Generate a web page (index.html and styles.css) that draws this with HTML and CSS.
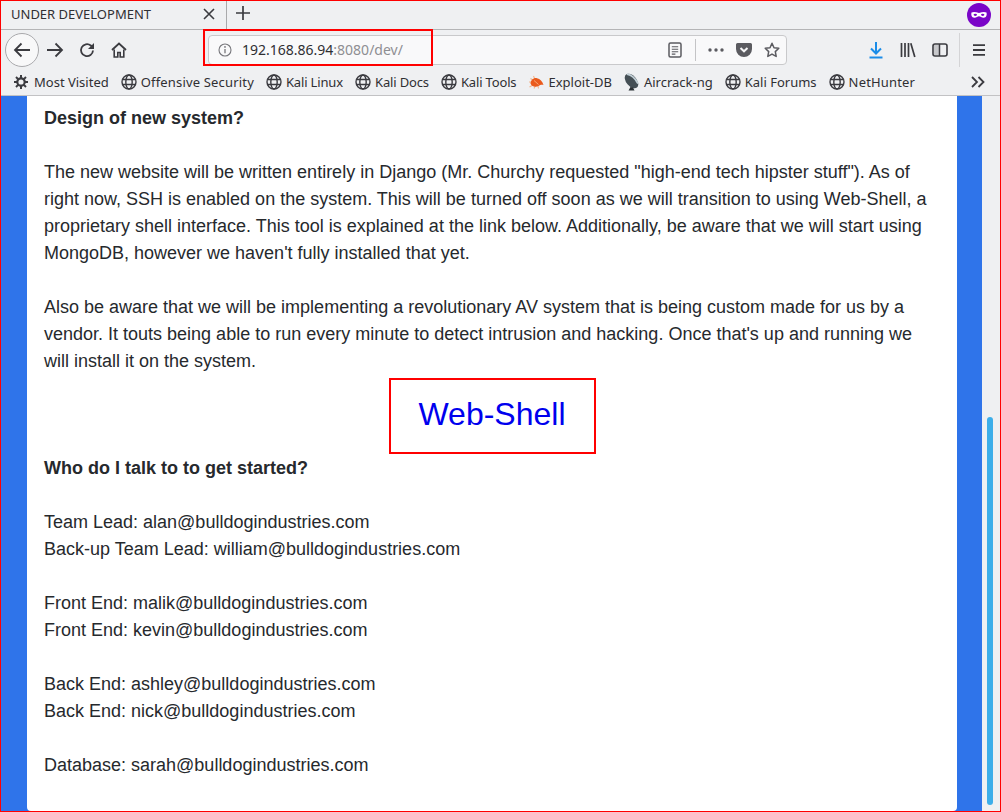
FILE: index.html
```html
<!DOCTYPE html>
<html lang="en">
<head>
<meta charset="utf-8">
<title>UNDER DEVELOPMENT</title>
<link rel="stylesheet" href="styles.css">
</head>
<body>
<svg class="defs" width="0" height="0" aria-hidden="true">
  <symbol id="globe" viewBox="0 0 16 16">
    <g fill="none" stroke="#3b3b40" stroke-width="1.4">
      <circle cx="8" cy="8" r="7"/>
      <ellipse cx="8" cy="8" rx="3.2" ry="7"/>
      <path d="M1.4 5.5h13.2M1.4 10.5h13.2"/>
    </g>
  </symbol>
</svg>
<div class="window">
  <header class="tabbar">
    <div class="tab">
      <span class="tab-title">UNDER DEVELOPMENT</span>
      <svg class="tab-close" width="12" height="12" viewBox="0 0 12 12"><path d="M1 1l10 10M11 1L1 11" stroke="#3b3b40" stroke-width="1.6" fill="none"/></svg>
    </div>
    <svg class="new-tab" width="16" height="16" viewBox="0 0 16 16"><path d="M8 1v14M1 8h14" stroke="#3b3b40" stroke-width="1.7" fill="none"/></svg>
    <div class="spacer"></div>
    <svg class="mask" width="24" height="24" viewBox="0 0 24 24"><circle cx="12" cy="12" r="12" fill="#7a05c8"/><path d="M4.5 9.5c2-1 4.500-.6 7.500.6 3-1.200 5.500-1.600 7.500-.6.600 2.600-.2 5-2.800 5.200-2 .1-3.300-1.500-4.700-1.500s-2.700 1.600-4.700 1.500C4.700 14.500 3.900 12.100 4.500 9.500z" fill="#fff"/><ellipse cx="8.300" cy="11.800" rx="1.700" ry="1.100" fill="#7a05c8"/><ellipse cx="15.700" cy="11.800" rx="1.700" ry="1.100" fill="#7a05c8"/></svg>
  </header>

  <nav class="navbar">
    <button class="back-btn"><svg width="18" height="16" viewBox="0 0 18 16"><path d="M17 8H2M8.500 1.500L2 8l6.500 6.500" stroke="#3b3b40" stroke-width="1.800" fill="none"/></svg></button>
    <button class="nav-btn"><svg width="18" height="16" viewBox="0 0 18 16"><path d="M1 8h15M9.500 1.500L16 8l-6.500 6.500" stroke="#3b3b40" stroke-width="1.800" fill="none"/></svg></button>
    <button class="nav-btn"><svg width="16" height="16" viewBox="0 0 16 16"><path d="M14 8.500A6 6 0 1 1 11.800 3.500L14.500 5.800" stroke="#3b3b40" stroke-width="1.800" fill="none"/><path d="M15 1v6H9z" fill="#3b3b40"/></svg></button>
    <button class="nav-btn"><svg width="16" height="16" viewBox="0 0 16 16"><path d="M1 8l7-6.500L15 8" stroke="#3b3b40" stroke-width="1.800" fill="none"/><path d="M3.200 7.500V15h3.600v-4.500h2.400V15h3.600V7.500" stroke="#3b3b40" stroke-width="1.600" fill="none"/></svg></button>
    <div class="urlbar">
      <svg class="info" width="14" height="14" viewBox="0 0 14 14"><circle cx="7" cy="7" r="6" fill="none" stroke="#77777c" stroke-width="1.100"/><path d="M7 6v4.200" stroke="#77777c" stroke-width="1.300"/><circle cx="7" cy="3.900" r=".9" fill="#77777c"/></svg>
      <span class="url"><span class="url-host">192.168.86.94</span><span class="url-rest">:8080/dev/</span></span>
      <div class="spacer"></div>
      <svg class="reader" width="14" height="16" viewBox="0 0 14 16"><rect x="1" y="1" width="12" height="14" rx="1.500" fill="none" stroke="#5b5b60" stroke-width="1.500"/><path d="M3.800 4.700h6.400M3.800 7.200h6.400M3.800 9.700h6.400M3.800 12.100h3.600" stroke="#5b5b60" stroke-width="1.100"/></svg>
      <span class="url-sep"></span>
      <svg class="dots" width="16" height="4" viewBox="0 0 16 4"><circle cx="2" cy="2" r="1.700" fill="#5b5b60"/><circle cx="8" cy="2" r="1.700" fill="#5b5b60"/><circle cx="14" cy="2" r="1.700" fill="#5b5b60"/></svg>
      <svg class="pocket" width="16" height="14" viewBox="0 0 16 14"><path d="M1.500 0h13A1.500 1.500 0 0 1 16 1.500V6A8 8 0 0 1 0 6V1.500A1.500 1.500 0 0 1 1.500 0z" fill="#5b5b60"/><path d="M4.500 5L8 8.300 11.500 5" stroke="#f6f6f7" stroke-width="2" fill="none"/></svg>
      <svg class="star" width="16" height="16" viewBox="0 0 16 16"><path d="M8 1.300l2 4.400 4.800.6-3.500 3.300.9 4.800L8 12.100l-4.200 2.300.9-4.800L1.200 6.300 6 5.700z" fill="none" stroke="#5b5b60" stroke-width="1.500" stroke-linejoin="round"/></svg>
    </div>
    <div class="spacer"></div>
    <button class="nav-btn"><svg width="16" height="18" viewBox="0 0 16 18"><path d="M8 1v11M3 7.500l5 5 5-5" stroke="#1a8ce8" stroke-width="2" fill="none"/><path d="M1.500 16.500h13" stroke="#1a8ce8" stroke-width="2"/></svg></button>
    <button class="nav-btn"><svg width="16" height="16" viewBox="0 0 16 16"><path d="M1.500 1v14M5 1v14M8.500 1v14M10.800 1.200l4 13.800" stroke="#3b3b40" stroke-width="1.700" fill="none"/></svg></button>
    <button class="nav-btn"><svg width="16" height="14" viewBox="0 0 16 14"><rect x="1" y="1" width="14" height="12" rx="2" fill="none" stroke="#3b3b40" stroke-width="1.600"/><path d="M2 2h5v10H2z" fill="#3b3b40" opacity=".22"/><path d="M7.500 1v12" stroke="#3b3b40" stroke-width="1.500"/></svg></button>
    <span class="nav-sep"></span>
    <button class="nav-btn"><svg width="14" height="12" viewBox="0 0 14 12"><path d="M1 1.200h12M1 6h12M1 10.800h12" stroke="#3b3b40" stroke-width="1.800"/></svg></button>
  </nav>

  <div class="bookmarks">
    <a class="bm"><svg width="14" height="14" viewBox="0 0 14 14"><circle cx="7" cy="7" r="3.700" fill="none" stroke="#3b3b40" stroke-width="2.200"/><path d="M7 0v3M7 11v3M0 7h3M11 7h3M2 2l2.100 2.100M9.900 9.900L12 12M12 2L9.900 4.100M4.100 9.900L2 12" stroke="#3b3b40" stroke-width="2"/></svg><span>Most Visited</span></a>
    <a class="bm bm-wide"><svg width="16" height="16"><use href="#globe"/></svg><span>Offensive Security</span></a>
    <a class="bm bm-tight"><svg width="16" height="16"><use href="#globe"/></svg><span>Kali Linux</span></a>
    <a class="bm bm-tight"><svg width="16" height="16"><use href="#globe"/></svg><span>Kali Docs</span></a>
    <a class="bm bm-tight"><svg width="16" height="16"><use href="#globe"/></svg><span>Kali Tools</span></a>
    <a class="bm"><svg width="16" height="16" viewBox="0 0 16 16"><path d="M1 8h3M2.500 4.500L5.500 6.500M5.500 2l1.500 3.500M1.500 13L5 11M6 14.500l1.500-3M10.500 14.500L10 12" stroke="#f2b48c" stroke-width="1.100" fill="none"/><path d="M2.500 9.500C3 6 5.500 3.500 9 4.200c3 .6 5.500 3.300 6.500 6.800-2.200-.4-3.500.2-5 1-2.800 1.300-6.700.8-8-2.500z" fill="#ea5a1c"/><path d="M6 6.500l4.500 4" stroke="#f8a878" stroke-width="1"/></svg><span>Exploit-DB</span></a>
    <a class="bm"><svg width="16" height="18" viewBox="0 0 16 18"><ellipse cx="7.500" cy="8" rx="8.500" ry="5.200" transform="rotate(50 7.500 8)" fill="#454f55"/><path d="M3 1.200c4.500.8 8.500 4.500 11 9.500" stroke="#c3d0d7" stroke-width="1.800" fill="none"/><path d="M6.500 14l-2 3.500h6L9 14.500z" fill="#2b3034"/></svg><span>Aircrack-ng</span></a>
    <a class="bm"><svg width="16" height="16"><use href="#globe"/></svg><span>Kali Forums</span></a>
    <a class="bm bm-wide"><svg width="16" height="16"><use href="#globe"/></svg><span>NetHunter</span></a>
    <div class="spacer"></div>
    <svg class="more" width="14" height="12" viewBox="0 0 14 12"><path d="M1 1l5 5-5 5M7.500 1l5 5-5 5" stroke="#3b3b40" stroke-width="1.800" fill="none"/></svg>
  </div>

  <div class="viewport">
    <main class="page">
      <article class="card">
        <p><strong>Design of new system?</strong></p>
        <p>The new website will be written entirely in Django (Mr. Churchy requested "high-end tech hipster stuff"). As of right now, SSH is enabled on the system. This will be turned off soon as we will transition to using Web-Shell, a proprietary shell interface. This tool is explained at the link below. Additionally, be aware that we will start using MongoDB, however we haven't fully installed that yet.</p>
        <p class="last">Also be aware that we will be implementing a revolutionary AV system that is being custom made for us by a vendor. It touts being able to run every minute to detect intrusion and hacking. Once that's up and running we will install it on the system.</p>
        <div class="link-row"><a class="shell-link" href="#">Web-Shell</a></div>
        <p><strong>Who do I talk to to get started?</strong></p>
        <p>Team Lead: alan@bulldogindustries.com<br>Back-up Team Lead: william@bulldogindustries.com</p>
        <p>Front End: malik@bulldogindustries.com<br>Front End: kevin@bulldogindustries.com</p>
        <p>Back End: ashley@bulldogindustries.com<br>Back End: nick@bulldogindustries.com</p>
        <p class="last">Database: sarah@bulldogindustries.com</p>
      </article>
    </main>
    <div class="scrollbar"><div class="thumb"></div></div>
  </div>
  <div class="url-highlight"></div>
</div>
</body>
</html>
```
FILE: styles.css
```css
* { box-sizing: border-box; }
html, body { margin: 0; padding: 0; height: 812px; overflow: hidden; background: #eff0f2; }
.defs { position: absolute; }
.spacer { flex: 1; }

.window {
  position: relative;
  width: 1001px;
  height: 812px;
  border: 1px solid #ff0000;
  display: flex;
  flex-direction: column;
  font-family: "Noto Sans", sans-serif;
  font-size: 13px;
  color: #2f2f33;
  background: #eff0f2;
  overflow: hidden;
}

.tabbar {
  height: 29px;
  flex: none;
  display: flex;
  align-items: center;
  border-bottom: 1px solid #b4b4b6;
  padding-right: 9px;
}
.tab {
  width: 226px;
  height: 28px;
  display: flex;
  align-items: center;
  padding: 0 11px 3px 10px;
  border-right: 1px solid #a9a9ab;
}
.tab-title { flex: 1; white-space: nowrap; }
.tab-close { flex: none; }
.new-tab { margin-left: 8px; margin-bottom: 5px; }

.navbar {
  height: 36px;
  flex: none;
  display: flex;
  align-items: center;
  padding: 3px 5px 0 4px;
}
button {
  border: 0;
  background: none;
  padding: 0;
  display: flex;
  align-items: center;
  justify-content: center;
}
.back-btn {
  width: 34px;
  height: 34px;
  border-radius: 50%;
  background: #f8f8f9;
  border: 1px solid #a9a9ac;
  flex: none;
}
.nav-btn { width: 32px; height: 32px; flex: none; }
.nav-sep { width: 1px; height: 34px; background: #d4d4d6; margin: 0 3px; flex: none; }

.urlbar {
  width: 579px;
  height: 30px;
  margin-left: 73px;
  flex: none;
  display: flex;
  align-items: center;
  padding: 0 6px 0 9px;
  background: #f9f9fa;
  border: 1px solid #c9c9cb;
  border-radius: 4px;
}
.url { margin-left: 10px; font-size: 14px; white-space: nowrap; }
.url-host { color: #2f2f33; }
.url-rest { color: #8e8e92; }
.reader { margin-right: 13px; }
.url-sep { width: 1px; height: 22px; background: #c4c4c6; margin-right: 12px; }
.dots { margin-right: 12px; }
.pocket { margin-right: 12px; }

.bookmarks {
  height: 30px;
  flex: none;
  display: flex;
  align-items: center;
  gap: 12px;
  padding: 2px 15px 0 13px;
  border-bottom: 1px solid #c2c2c4;
}
.bm { display: flex; align-items: center; gap: 4px; white-space: nowrap; }
.bm:first-child { gap: 6px; }
.bm-wide span { letter-spacing: .17px; }
.bm-tight span { letter-spacing: -.15px; }

.viewport { flex: 1; min-height: 0; display: flex; background: #fff; }
.page {
  flex: 1;
  min-width: 0;
  background: #2f74ea;
  padding: 0 25px 0 26px;
  overflow: hidden;
}
.card {
  height: 100%;
  background: #fff;
  border-radius: 0 0 4px 4px;
  padding: 9px 18px 0 17px;
  font-family: "Liberation Sans", Arial, sans-serif;
  font-size: 18px;
  line-height: 27px;
  color: #26292d;
}
.card p { margin: 0 0 27px; }
.card p.last { margin-bottom: 0; }
.link-row { display: flex; justify-content: center; margin: 3px 0 0; padding-left: 1px; height: 77px; }
.shell-link {
  display: block;
  width: 207px;
  height: 76px;
  border: 2px solid #ff0000;
  font-size: 32px;
  line-height: 68px;
  text-align: center;
  color: #0000ee;
  text-decoration: none;
}

.scrollbar { width: 18px; flex: none; background: #eff0f2; padding: 321px 0 0 5px; }
.thumb { width: 6px; height: 388px; background: #3daee9; border-radius: 3px; }

.url-highlight {
  position: absolute;
  left: 202px;
  top: 28px;
  width: 230px;
  height: 37px;
  border: 2px solid #ff0000;
  pointer-events: none;
}
```
